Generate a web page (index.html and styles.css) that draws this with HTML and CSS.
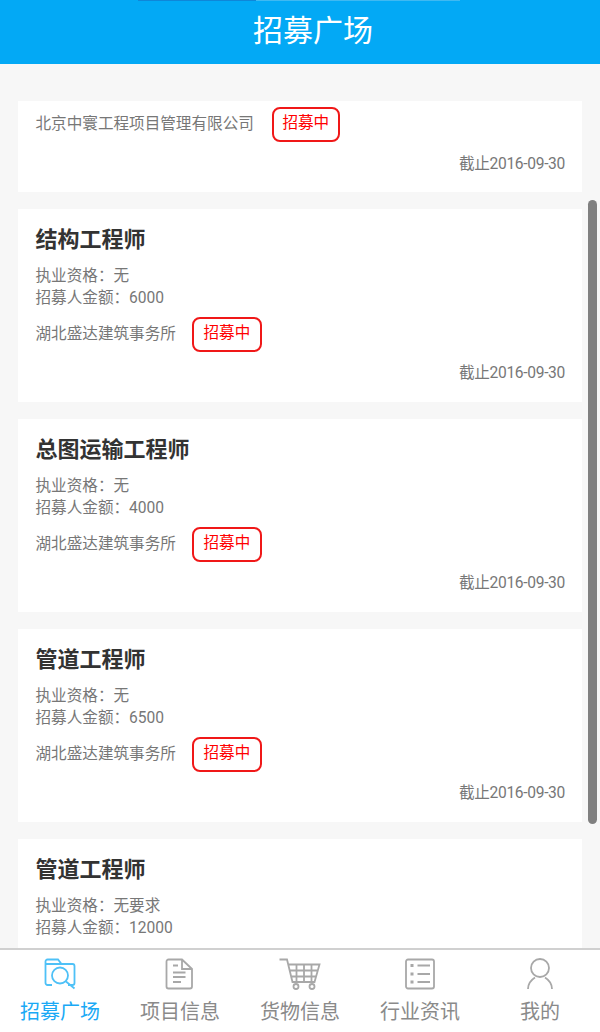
FILE: index.html
```html
<!DOCTYPE html>
<html lang="zh-CN">
<head>
<meta charset="utf-8">
<title>招募广场</title>
<link rel="stylesheet" href="styles.css">
</head>
<body>
<div class="app">
  <header class="topbar"><div class="topline"></div><h1>招募广场</h1></header>
  <main class="list">
    <section class="card card-cut">
      <div class="org"><span>北京中寰工程项目管理有限公司</span><span class="badge">招募中</span></div>
      <div class="date">截止2016-09-30</div>
    </section>
    <section class="card">
      <h2>结构工程师</h2>
      <p>执业资格：无</p>
      <p>招募人金额：6000</p>
      <div class="org"><span>湖北盛达建筑事务所</span><span class="badge">招募中</span></div>
      <div class="date">截止2016-09-30</div>
    </section>
    <section class="card">
      <h2>总图运输工程师</h2>
      <p>执业资格：无</p>
      <p>招募人金额：4000</p>
      <div class="org"><span>湖北盛达建筑事务所</span><span class="badge">招募中</span></div>
      <div class="date">截止2016-09-30</div>
    </section>
    <section class="card">
      <h2>管道工程师</h2>
      <p>执业资格：无</p>
      <p>招募人金额：6500</p>
      <div class="org"><span>湖北盛达建筑事务所</span><span class="badge">招募中</span></div>
      <div class="date">截止2016-09-30</div>
    </section>
    <section class="card">
      <h2>管道工程师</h2>
      <p>执业资格：无要求</p>
      <p>招募人金额：12000</p>
    </section>
    <div class="scrollbar"></div>
  </main>
  <nav class="tabs">
    <a class="tab active">
      <svg viewBox="0 0 32 32"><path d="M8 27H3.500a2 2 0 0 1-2-2V3.500a2 2 0 0 1 2-2H14l3.500 4.500H28.500a2 2 0 0 1 2 2v17a2 2 0 0 1-2 2H24M1.500 6H17.500"/><circle cx="16" cy="17.500" r="8"/><path d="M22 23.500l8.500 7"/></svg>
      <span>招募广场</span>
    </a>
    <a class="tab">
      <svg viewBox="0 0 32 32"><path d="M18 1.500H4.500a2 2 0 0 0-2 2v25a2 2 0 0 0 2 2h21.500a2 2 0 0 0 2-2V11zM18 1.500V11H28M9 7.500h5M9 14.500h12.500M9 19h12.500M9 24h8"/></svg>
      <span>项目信息</span>
    </a>
    <a class="tab">
      <svg class="wide" viewBox="0 0 42 32"><path d="M.5 1.500H8L13.500 24H35.500L40.500 6.500H9M17.500 6.500V24M25 6.500V24M32.500 6.500V24M10.500 12.500H39M12 18.500H37.500"/><circle cx="17" cy="28.500" r="2.500"/><circle cx="33" cy="28.500" r="2.500"/></svg>
      <span>货物信息</span>
    </a>
    <a class="tab">
      <svg viewBox="0 0 32 32"><rect x="2" y="1.500" width="28" height="29" rx="2"/><path d="M13.500 7.500H26M13.500 16H26M13.500 24H26"/><path class="dots" d="M6.500 7.500h3M6.500 16h3M6.500 24h3"/></svg>
      <span>行业资讯</span>
    </a>
    <a class="tab">
      <svg viewBox="0 0 32 32"><circle cx="16" cy="10" r="9"/><path d="M4 31c0-5 3-9 7-11.500M28 31c0-5-3-9-7-11.500"/></svg>
      <span>我的</span>
    </a>
  </nav>
</div>
</body>
</html>
```
FILE: styles.css
```css
* { box-sizing: border-box; margin: 0; padding: 0; }
html, body { height: 100%; }
body { font-family: Roboto, "Noto Sans CJK SC", sans-serif; background: #f7f7f7; overflow: hidden; }
.app { width: 600px; height: 1032px; display: flex; flex-direction: column; overflow: hidden; }
.topbar { position: relative; height: 64px; flex: none; background: #03a9f5; display: flex; align-items: center; justify-content: center; padding: 0 0 2px 26px; }
.topline { position: absolute; left: 138px; top: 0; width: 322px; height: 1px; background: linear-gradient(to right, #0f86d8 0 118px, #3fb9f2 118px 322px); }
.topbar h1 { font-size: 30px; font-weight: 400; color: #fff; line-height: 60px; }
.list { position: relative; flex: 1; overflow: hidden; padding: 37px 18px 0; display: flex; flex-direction: column; gap: 17px; background: #f7f7f7; }
.card { flex: none; height: 193px; background: #fff; padding: 17px 17px 0 17.500px; display: flex; flex-direction: column; }
.card-cut { height: 91px; padding-top: 6px; }
.card h2 { font-size: 22px; font-weight: 700; line-height: 28px; color: #333; margin-bottom: 11px; }
.card p { font-size: 15.600px; line-height: 22px; color: #777; }
.org { display: flex; align-items: center; font-size: 15.600px; color: #777; margin-top: 8px; height: 35px; }
.org > span:first-child { padding-bottom: 6px; }
.card-cut .org { margin-top: 0; }
.card-cut .date { margin-top: 11px; }
.badge { margin-left: 16px; width: 70px; height: 35px; border: 2px solid #f01818; border-radius: 8px; color: #f00; display: flex; align-items: center; justify-content: center; padding-bottom: 7px; }
.card-cut .badge { margin-left: 18px; width: 68px; }
.date { font-size: 15.600px; line-height: 22px; color: #777; text-align: right; margin-top: 10px; letter-spacing: -0.330px; }
.scrollbar { position: absolute; left: 588px; top: 136px; width: 9px; height: 624px; background: #808080; border-radius: 5px; }
.tabs { height: 84px; flex: none; background: #fff; border-top: 2px solid #d0d0d0; display: grid; grid-template-columns: repeat(5, 120px); }
.tab { display: flex; flex-direction: column; align-items: center; color: #8a8a8a; font-size: 20px; padding-top: 8px; }
.tab svg { width: 32px; height: 32px; fill: none; stroke: #a8a8a8; stroke-width: 1.800; flex: none; }
.tab svg.wide { width: 42px; }
.tab span { line-height: 30px; margin-top: 7px; }
.tab.active { color: #1aa9f5; }
.tab.active svg { stroke: #4ec1f7; }
.dots { stroke-width: 3; }
```
